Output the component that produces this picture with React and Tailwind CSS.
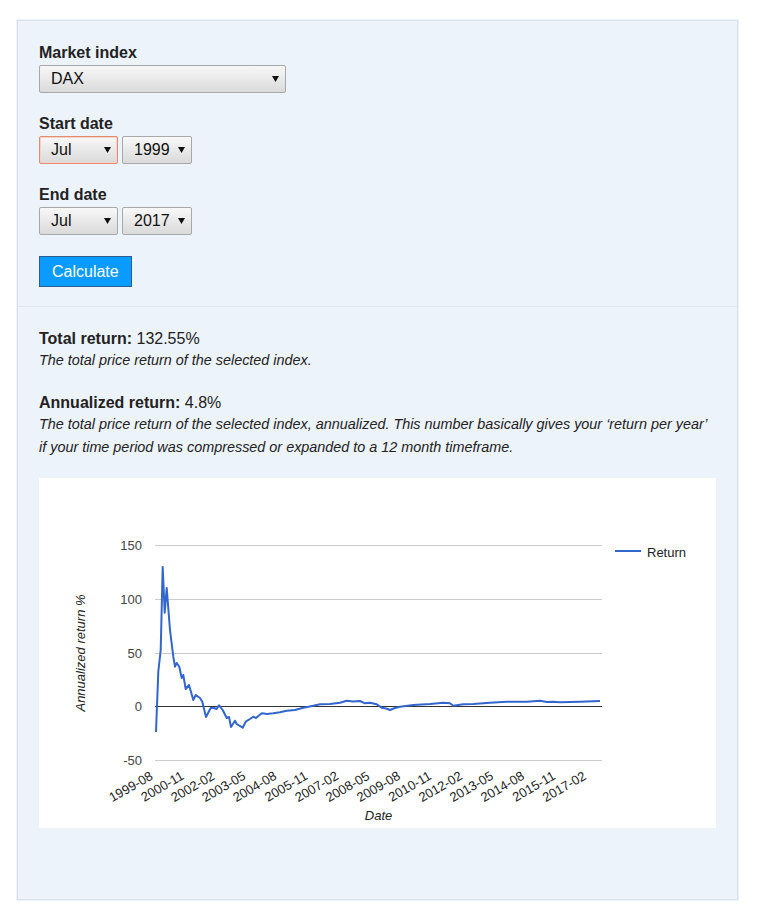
import React from "react";

// page-space points traced from the reference, shifted into chart space below
const RETURN_POINTS = [
  [156, 732], [158.3, 671.7], [160.7, 650], [162.7, 567], [164.7, 612.7], [166.7, 588],
  [170, 630], [173.3, 656.7], [175, 666.7], [176.7, 663], [179.3, 666.7], [181.7, 678],
  [183.3, 675], [185.7, 689], [189, 685], [193.3, 700], [195.7, 695], [200, 698],
  [202.3, 701.7], [206, 717], [210.7, 708], [213.3, 707.7], [216.7, 709], [219, 705.3],
  [222.7, 710], [226.7, 718], [229, 717], [231, 727], [235, 720.7], [236.7, 724],
  [242.7, 727.7], [245.7, 721.7], [250, 719], [253.3, 716.7], [256, 718], [261.7, 713.3],
  [267, 714], [273.3, 713.3], [280, 712.3], [286.7, 710.7], [295, 710], [303.3, 707.7],
  [313.3, 705.7], [320, 704.3], [330, 704], [340, 702.7], [346.7, 700.7], [353, 701.5],
  [360, 701], [365, 703.3], [370, 702.7], [376.7, 704.3], [381.7, 707.7], [386, 708.5],
  [390, 710], [395, 708], [400, 706.7], [413.3, 705], [430, 704], [443.3, 702.7],
  [450, 703.3], [453.3, 705.7], [463.3, 704.3], [473.3, 704], [490, 702.7], [506.7, 701.7],
  [526.7, 701.7], [540, 700.7], [547, 702], [553.3, 701.7], [560, 702.3], [580, 701.7],
  [600, 701],
];

const X_LABELS = [
  "1999-08", "2000-11", "2002-02", "2003-05", "2004-08", "2005-11", "2007-02", "2008-05",
  "2009-08", "2010-11", "2012-02", "2013-05", "2014-08", "2015-11", "2017-02",
];

const GRID = [
  { y: 67.5, label: "150" },
  { y: 121.5, label: "100" },
  { y: 175.5, label: "50" },
  { y: 282.5, label: "-50" },
];

const Arrow = () => (
  <svg width="7" height="6" viewBox="0 0 7 6" className="shrink-0">
    <polygon points="0,0 7,0 3.5,6" fill="#111" />
  </svg>
);

const Select = ({ value, width, focus }) => (
  <div
    className={`${width} h-[28px] flex items-center justify-between pl-[11px] pr-[6px] rounded-[2px] border bg-linear-to-b from-[#f8f8f8] to-[#dadada] text-[16px] text-[#111] ${
      focus ? "border-[#e38c70] shadow-[inset_0_0_0_1px_#f3d3c6]" : "border-[#a8a8a8]"
    }`}
  >
    <span>{value}</span>
    <Arrow />
  </div>
);

const Field = ({ label, children }) => (
  <div className="mb-[21px]">
    <div className="font-bold text-[16px] leading-[20px] mb-[2px]">{label}</div>
    <div className="flex gap-[4px]">{children}</div>
  </div>
);

const Chart = () => {
  const line = RETURN_POINTS.map(([x, y]) => `${x - 39},${y - 478}`).join(" ");
  return (
    <div className="bg-white h-[350px]">
      <svg width="678" height="350" className="block" fontFamily="'Liberation Sans', Arial, sans-serif">
        {GRID.map((g) => (
          <g key={g.label}>
            <line x1="116" x2="563" y1={g.y} y2={g.y} stroke="#cccccc" strokeWidth="1" />
            <text x="103" y={g.y + 4.5} textAnchor="end" fontSize="13" fill="#444">
              {g.label}
            </text>
          </g>
        ))}
        <text x="103" y="233" textAnchor="end" fontSize="13" fill="#444">0</text>
        <line x1="116" x2="563" y1="228.5" y2="228.5" stroke="#333" strokeWidth="1" />
        <polyline points={line} fill="none" stroke="#3366cc" strokeWidth="2" strokeLinejoin="round" />

        {X_LABELS.map((l, i) => {
          const x = 114.7 + i * 30.96;
          return (
            <text key={l} x={x} y="300.5" textAnchor="end" fontSize="13" fill="#222" transform={`rotate(-30 ${x} 300.5)`}>
              {l}
            </text>
          );
        })}

        <text x="339.5" y="341.5" textAnchor="middle" fontSize="13" fontStyle="italic" fill="#222">
          Date
        </text>
        <text x="45.5" y="175" textAnchor="middle" fontSize="13" fontStyle="italic" fill="#222" transform="rotate(-90 45.5 175)">
          Annualized return %
        </text>

        <line x1="576" x2="602" y1="73" y2="73" stroke="#3366cc" strokeWidth="2" />
        <text x="608" y="78.5" fontSize="13" fill="#222">Return</text>
      </svg>
    </div>
  );
};

export default function App() {
  return (
    <div className="min-h-screen bg-white pt-[20px] pl-[17px] font-['Liberation_Sans',Arial,sans-serif] text-[#222]">
      <div className="w-[721px] bg-[#edf3fa] border border-[#d8e2ec] shadow-[0_0_0_1px_#eef3f8]">
        <div className="px-[21px] pt-[22px] pb-[19px] border-b border-[#dfe7ef]">
          <Field label="Market index">
            <Select value="DAX" width="w-[247px]" />
          </Field>
          <Field label="Start date">
            <Select value="Jul" width="w-[79px]" focus />
            <Select value="1999" width="w-[70px]" />
          </Field>
          <Field label="End date">
            <Select value="Jul" width="w-[79px]" />
            <Select value="2017" width="w-[70px]" />
          </Field>
          <button className="h-[31px] px-[12px] bg-[#0a9bff] border border-[#2b5d92] text-white text-[16px]">
            Calculate
          </button>
        </div>

        <div className="px-[21px] pt-[22px] pb-[71px]">
          <div className="text-[16px] leading-[20px]">
            <span className="font-bold">Total return:</span> 132.55%
          </div>
          <p className="italic text-[14.4px] leading-[22px]">The total price return of the selected index.</p>

          <div className="text-[16px] leading-[20px] mt-[22px]">
            <span className="font-bold">Annualized return:</span> 4.8%
          </div>
          <p className="italic text-[14.4px] leading-[23px]">
            The total price return of the selected index, annualized. This number basically gives your ‘return per year’
            if your time period was compressed or expanded to a 12 month timeframe.
          </p>

          <div className="mt-[19px]">
            <Chart />
          </div>
        </div>
      </div>
    </div>
  );
}
